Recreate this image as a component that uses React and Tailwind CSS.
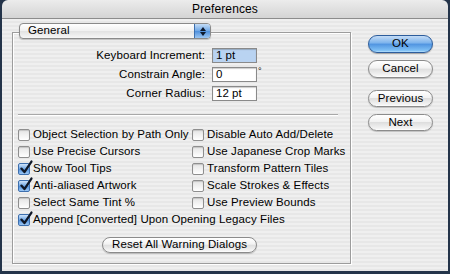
import React from "react";

const font = { fontFamily: '"Liberation Sans", Arial, sans-serif' };

function Check({ checked }) {
  if (checked) {
    return (
      <div className="relative w-[12px] h-[12px] shrink-0 rounded-[2px] border border-[#3d6fae] bg-[linear-gradient(#cfe3fa,#6ea7e6_50%,#4e8fdc_51%,#9cc7f4)]">
        <svg viewBox="0 0 12 12" className="absolute left-[0px] top-[-3px] w-[13px] h-[13px] overflow-visible">
          <path d="M2.2 7 L5 10.2 L11.5 0.5" fill="none" stroke="#101828" strokeWidth="2.1" strokeLinecap="round" strokeLinejoin="round" />
        </svg>
      </div>
    );
  }
  return (
    <div className="w-[12px] h-[12px] shrink-0 rounded-[2px] border border-[#8e8e8e] bg-[linear-gradient(#e4e4e4,#ffffff)] shadow-[inset_0_1px_1px_rgba(0,0,0,0.15)]" />
  );
}

function CB({ checked, label, className = "" }) {
  return (
    <div className={"flex items-center h-[17px] gap-[3px] " + className}>
      <Check checked={checked} />
      <span className="text-[11.5px] tracking-[0.1px] text-black whitespace-nowrap">{label}</span>
    </div>
  );
}

function Btn({ children, primary, className = "" }) {
  const base =
    "flex items-center justify-center rounded-full text-[11.5px] tracking-[0.1px] text-black " + className;
  if (primary) {
    return (
      <div className={base + " border border-[#2d5d9c] bg-[linear-gradient(#c4dcf6,#7ab2ec_45%,#4f93e0_50%,#7fc0f5_90%,#b7e0fb)] shadow-[0_1px_1px_rgba(0,0,0,0.3)]"}>
        {children}
      </div>
    );
  }
  return (
    <div className={base + " border border-[#8b8b8b] bg-[linear-gradient(#ffffff,#f2f2f2_45%,#dedede_50%,#f4f4f4_90%,#ffffff)] shadow-[0_1px_1px_rgba(0,0,0,0.2)]"}>
      {children}
    </div>
  );
}

function Field({ label, value, highlight, degree }) {
  return (
    <div className="flex items-center h-[15px]">
      <div className="w-[192px] text-right text-[11.5px] tracking-[0.1px] text-black">{label}</div>
      <div
        className={
          "ml-[7px] w-[45px] h-[15px] border border-[#8a8a8a] flex items-center pl-[3px] text-[11.5px] text-black shadow-[inset_0_1px_1px_rgba(0,0,0,0.2)] " +
          (highlight ? "bg-[#b9d3f1]" : "bg-white")
        }
      >
        {value}
      </div>
      {degree && <span className="ml-[1px] -mt-[6px] text-[9px] text-black">°</span>}
    </div>
  );
}

export default function App() {
  return (
    <div className="w-[450px] h-[274px] bg-[#24344a] overflow-hidden" style={font}>
      <div className="ml-[2px] w-[446px] h-[271px] rounded-t-[6px] overflow-hidden flex flex-col">
        <div className="h-[19px] shrink-0 border-b border-[#8c8c8c] bg-[linear-gradient(#ececec,#d4d4d4)] flex items-center justify-center text-[12px] tracking-[0.1px] text-black">
          Preferences
        </div>
        <div className="flex-1 flex bg-[repeating-linear-gradient(180deg,#efefef_0px,#efefef_2px,#e7e7e7_2px,#e7e7e7_4px)]">
          <div className="pl-[10px] pt-[13px]">
            <div className="relative w-[339px] h-[232px] border border-[#9c9c9c] shadow-[inset_1px_1px_0_#ffffff,1px_1px_0_#ffffff] pt-[15px]">
              <div className="absolute left-[6px] top-[-10px] w-[192px] h-[16px] rounded-[4px] border border-[#8a8a8a] bg-[linear-gradient(#ffffff,#f0f0f0_50%,#e2e2e2_51%,#f6f6f6)] flex items-center shadow-[0_1px_1px_rgba(0,0,0,0.2)]">
                <span className="pl-[8px] flex-1 text-[11.5px] tracking-[0.1px] text-black">General</span>
                <div className="w-[16px] h-[14px] rounded-r-[3px] border-l border-[#3d6fae] bg-[linear-gradient(#c4dcf6,#6ea7e6_50%,#4e8fdc_51%,#9cc7f4)] flex flex-col items-center justify-center gap-[1px]">
                  <svg viewBox="0 0 6 4" className="w-[6px] h-[4px]"><path d="M0 4 L3 0 L6 4 Z" fill="#0d1a2e" /></svg>
                  <svg viewBox="0 0 6 4" className="w-[6px] h-[4px]"><path d="M0 0 L3 4 L6 0 Z" fill="#0d1a2e" /></svg>
                </div>
              </div>
              <div className="flex flex-col gap-[4px]">
                <Field label="Keyboard Increment:" value="1 pt" highlight />
                <Field label="Constrain Angle:" value="0" degree />
                <Field label="Corner Radius:" value="12 pt" />
              </div>
              <div className="ml-[5px] mt-[13px] w-[320px] border-t border-[#a8a8a8] border-b border-b-white" />
              <div className="mt-[10px] pl-[5px] grid grid-cols-[174px_auto]">
                <CB label="Object Selection by Path Only" />
                <CB label="Disable Auto Add/Delete" />
                <CB label="Use Precise Cursors" />
                <CB label="Use Japanese Crop Marks" />
                <CB checked label="Show Tool Tips" />
                <CB label="Transform Pattern Tiles" />
                <CB checked label="Anti-aliased Artwork" />
                <CB label="Scale Strokes & Effects" />
                <CB label="Select Same Tint %" />
                <CB label="Use Preview Bounds" />
                <CB checked label="Append [Converted] Upon Opening Legacy Files" className="col-span-2" />
              </div>
              <div className="mt-[9px] ml-[89px] w-[155px]">
                <Btn className="h-[16px]">Reset All Warning Dialogs</Btn>
              </div>
            </div>
          </div>
          <div className="ml-[17px] pt-[16px] flex flex-col w-[65px]">
            <Btn primary className="h-[18px]">OK</Btn>
            <Btn className="h-[18px] mt-[7px]">Cancel</Btn>
            <Btn className="h-[17px] mt-[12px]">Previous</Btn>
            <Btn className="h-[17px] mt-[7px]">Next</Btn>
          </div>
        </div>
      </div>
    </div>
  );
}
